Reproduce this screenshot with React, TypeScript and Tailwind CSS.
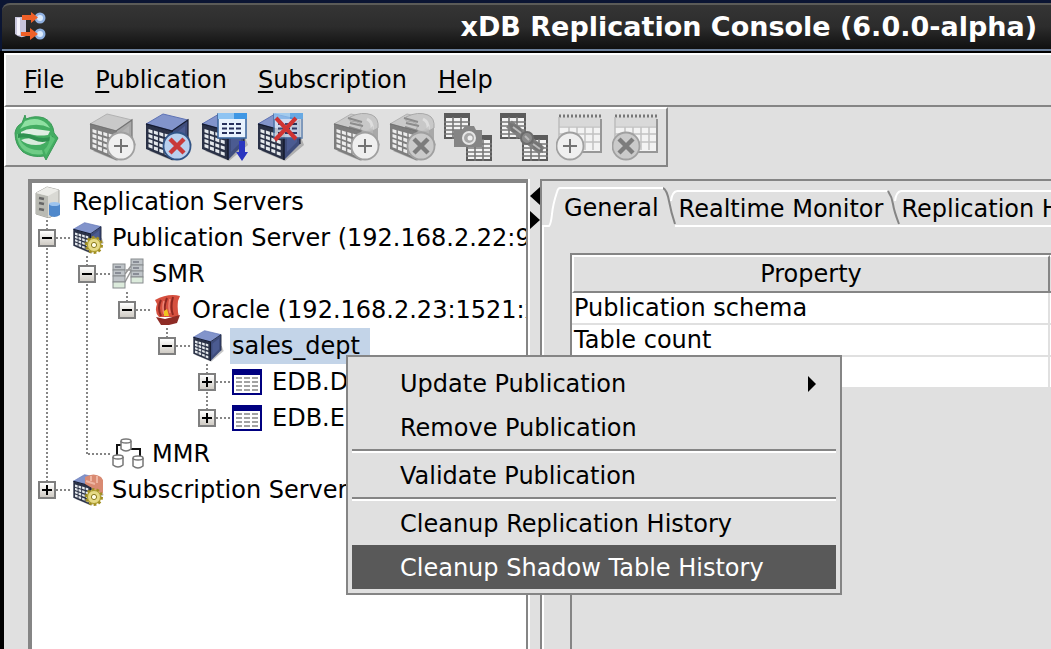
import type { ReactNode } from "react";

/* ---------- shared drawing parts ---------- */

type Tone = "blue" | "gray";

const tones = {
  blue: { top: "#8294cb", topLo: "#5f73b5", left: "#2a3146", right: "#3f4d7c", win: "#e4e8ec", edge: "#161c30" },
  gray: { top: "#c9c9c9", topLo: "#b2b2b2", left: "#7d7d7d", right: "#a9a9a9", win: "#ededed", edge: "#747474" },
};

function Cube({ tone = "blue", round = false }: { tone?: Tone; round?: boolean }) {
  const t = tones[tone];
  const windows = [];
  for (let r = 0; r < 4; r++) {
    for (let c = 0; c < 4; c++) {
      const x = 4.5 + c * 5.4;
      const y = 16 + c * 1.5 + r * (5 + c * 0.3);
      windows.push(
        <path key={`${r}-${c}`} d={`M${x} ${y}l4 1.2v3.6l-4 -1.500z`} fill={t.win} />,
      );
    }
  }
  return (
    <g>
      <path d="M5 38L29 48L48 32L45 24Z" fill="#000" opacity="0.22" />
      <path d="M2 11L28 18V47L2 36Z" fill={t.left} />
      {round ? (
        <path d="M28 18L34 6Q46 4 46 14V28Q44 38 28 47Z" fill={t.right} />
      ) : (
        <path d="M28 18L44 7V31L28 47Z" fill={t.right} />
      )}
      <path d="M2 11L19 1L44 7L28 18Z" fill={t.top} stroke={t.topLo} strokeWidth="1" />
      {round && (
        <>
          <path d="M18 4Q30 -2 40 2Q47 5 46 15Q38 21 28 17Q34 9 18 8Z" fill="#c8c8c8" stroke="#a8a8a8" />
          <path d="M16 5L30 9M18 10L31 13M17 14L30 18" stroke="#8c8c8c" strokeWidth="2" />
          <path d="M35 6Q41 9 40 16" fill="none" stroke="#dedede" strokeWidth="3" />
        </>
      )}
      <path d="M2 11L28 18V47" fill="none" stroke={t.edge} strokeWidth="1.6" />
      {!round && <path d="M28 18L44 7V31" fill="none" stroke={t.edge} strokeWidth="1.2" />}
      <path d="M31 21L41 13V29L31 39Z" fill={tone === "blue" ? "#5366a0" : "#bdbdbd"} opacity="0.6" />
      {windows}
    </g>
  );
}

function Badge({ cx, kind, active = false }: { cx: number; kind: "plus" | "cross"; active?: boolean }) {
  return (
    <g>
      <circle
        cx={cx}
        cy="33"
        r="13.5"
        fill={active ? "#b9d0ee" : kind === "plus" ? "#efefef" : "#cacaca"}
        stroke={active ? "#315487" : "#a0a0a0"}
        strokeWidth="1.8"
      />
      {kind === "plus" ? (
        <path d={`M${cx - 7} 33H${cx + 7}M${cx} 26V40`} stroke="#737373" strokeWidth="2" />
      ) : (
        <path
          d={`M${cx - 7} 26L${cx + 7} 40M${cx + 7} 26L${cx - 7} 40`}
          stroke={active ? "#c93a3a" : "#7c7c7c"}
          strokeWidth="4.4"
        />
      )}
    </g>
  );
}

function SheetWindow({ dim = false }: { dim?: boolean }) {
  return (
    <g opacity={dim ? 0.75 : 1}>
      <rect x="18" y="1" width="28" height="24" fill="#e8f2fd" stroke="#3f6aa0" strokeWidth="1.6" />
      <rect x="18" y="0" width="29" height="6" fill="#3f97e4" />
      <rect x="18" y="0" width="16" height="6" fill="#8fc4f2" />
      <path d="M22 11H42M22 15.500H42M22 20H42" stroke="#27305c" strokeWidth="2" strokeDasharray="5 2" />
    </g>
  );
}

function MiniGrid({ x, y }: { x: number; y: number }) {
  return (
    <g>
      <rect x={x + 1} y={y + 1} width="24" height="24" fill="#f4f4f4" stroke="#5c5c5c" strokeWidth="2" />
      <rect x={x} y={y} width="26" height="5" fill="#5c5c5c" />
      <path
        d={`M${x} ${y + 9}h26M${x} ${y + 13}h26M${x} ${y + 17}h26M${x} ${y + 21}h26M${x + 9} ${y + 4}v22M${x + 17} ${y + 4}v22`}
        stroke="#777"
        strokeWidth="1.6"
      />
    </g>
  );
}

function Calendar() {
  return (
    <g>
      <rect x="3" y="4" width="42" height="34" fill="#f3f3f3" />
      <rect x="3" y="4" width="42" height="9" fill="#d9d9d9" />
      <path d="M3 3H46" stroke="#777" strokeWidth="3" strokeDasharray="2 2" />
      <path d="M3 14H44M3 21H44M3 29H44M13 14V37M21 14V37M29 14V37M37 14V37" stroke="#c2c2c2" strokeWidth="1.5" />
      <path d="M3 4V30" stroke="#bdbdbd" strokeWidth="1.500" />
      <path d="M45 6V39H20" fill="none" stroke="#979797" strokeWidth="2" />
    </g>
  );
}

function Gear() {
  return (
    <g>
      <circle cx="22" cy="23" r="7.500" fill="#d8c75c" stroke="#a18e22" strokeWidth="3" strokeDasharray="2.6 2.1" />
      <circle cx="22" cy="23" r="6.500" fill="#e6da86" stroke="#a99a30" />
      <circle cx="22" cy="23" r="2.600" fill="#fffde8" stroke="#8a7a1c" />
    </g>
  );
}

/* ---------- toolbar ---------- */

function ToolButton({ label, children }: { label: string; children: ReactNode }) {
  return (
    <button type="button" aria-label={label} className="size-12 shrink-0">
      <svg viewBox="0 0 48 48" className="size-12" aria-hidden="true">
        {children}
      </svg>
    </button>
  );
}

function Toolbar() {
  return (
    <div className="flex">
      <div
        role="toolbar"
        aria-label="Actions"
        className="flex gap-7 border-2 border-t-white border-r-[#858585] border-b-[#858585] border-l-white px-1.5 py-1"
      >
        <ToolButton label="Refresh">
          <path
            d="M13 2L14 6Q23 2 32 5Q41 9 42 20L46 25L34 47L32 43Q20 45 11 39Q3 32 3 20Q4 13 10 10Z"
            fill="#43ad62"
            stroke="#3a9a57"
            strokeWidth="1"
          />
          <path d="M13 8Q26 3 35 11L38 15Q26 9 12 14L8 16Z" fill="#8fe0a2" />
          <path d="M5 21Q5 32 13 38Q22 43 31 41L30 37Q18 38 11 31Q7 27 8 22Z" fill="#6fcc86" />
          <path d="M9 19Q16 15 23 16L38 18L36 22Q28 23 22 22Q15 20 9 22Z" fill="#dfeee2" />
          <path d="M9 27Q15 24 24 26Q30 28 36 26Q33 32 24 32Q14 32 9 27Z" fill="#d7eadb" />
          <path d="M6 21Q14 19 22 23Q31 27 41 23L40 27Q30 31 22 27Q14 23 6 25Z" fill="#2f9150" />
          <path d="M38 22L43 26L34 42L32 37Q38 32 38 22Z" fill="#5cc377" />
        </ToolButton>
        <div className="flex gap-2">
          <ToolButton label="Create publication">
            <Cube tone="gray" />
            <Badge cx={33} kind="plus" />
          </ToolButton>
          <ToolButton label="Remove publication">
            <Cube />
            <Badge cx={33} kind="cross" active />
          </ToolButton>
          <ToolButton label="Update publication">
            <Cube />
            <SheetWindow />
            <path d="M39 28H45V39H48L42 48L36 39H39Z" fill="#2a36c0" />
          </ToolButton>
          <ToolButton label="Remove tables">
            <Cube />
            <SheetWindow dim />
            <path d="M20 5L40 26M40 5L19 27" stroke="#cf3333" strokeWidth="4" />
          </ToolButton>
        </div>
        <div className="flex gap-2">
          <ToolButton label="Create subscription">
            <Cube tone="gray" round />
            <Badge cx={33} kind="plus" />
          </ToolButton>
          <ToolButton label="Remove subscription">
            <Cube tone="gray" round />
            <Badge cx={33} kind="cross" />
          </ToolButton>
          <ToolButton label="Snapshot">
            <MiniGrid x={0} y={0} />
            <MiniGrid x={22} y={22} />
            <path d="M10 17H18L21 13H30L32 17H38V34H10Z" fill="#858585" />
            <circle cx="25" cy="25" r="6" fill="#a8a8a8" stroke="#e6e6e6" strokeWidth="2" />
            <circle cx="26" cy="25" r="2.500" fill="#efefef" />
          </ToolButton>
          <ToolButton label="Synchronize">
            <MiniGrid x={0} y={0} />
            <MiniGrid x={22} y={22} />
            <path d="M9 11L42 38" stroke="#808080" strokeWidth="9" />
            <path d="M8 9L20 14L23 20L12 19ZM30 27L42 31L43 40L34 36Z" fill="#757575" />
            <circle cx="27" cy="25" r="6" fill="#8a8a8a" stroke="#6c6c6c" strokeWidth="2" />
            <path d="M13 14L21 20M25 23L29 27M33 31L40 36" stroke="#bababa" strokeWidth="2" />
          </ToolButton>
          <ToolButton label="Add schedule">
            <Calendar />
            <Badge cx={14} kind="plus" />
          </ToolButton>
          <ToolButton label="Remove schedule">
            <Calendar />
            <Badge cx={14} kind="cross" />
          </ToolButton>
        </div>
      </div>
    </div>
  );
}

/* ---------- tree ---------- */

type Guide = "line" | "blank" | "corner" | "minus" | "minusLast" | "plus" | "plusLast";

function GuideCell({ kind }: { kind: Guide }) {
  const paths: Record<Guide, string> = {
    line: "M15 0V36",
    blank: "",
    corner: "M15 0V18M16 18H40",
    minus: "M15 0V36M24 18H38",
    minusLast: "M15 0V18M24 18H38",
    plus: "M15 0V36M24 18H38",
    plusLast: "M15 0V18M24 18H38",
  };
  const isToggle = kind.startsWith("minus") || kind.startsWith("plus");
  const open = kind.startsWith("minus");
  return (
    <span className="grid h-9 w-10 shrink-0 items-center">
      <svg viewBox="0 0 40 36" className="h-9 w-10 [grid-area:1/1]" aria-hidden="true">
        <path d={paths[kind]} stroke="#858585" strokeWidth="2" strokeDasharray="2 2" fill="none" />
      </svg>
      {isToggle && (
        <button
          type="button"
          aria-label={open ? "Collapse" : "Expand"}
          className="ml-1.5 flex size-[18px] items-center justify-center border-2 border-[#7f7f7f] bg-linear-to-b from-white to-[#cfcbc4] [grid-area:1/1]"
        >
          <svg viewBox="0 0 14 14" className="size-3.5" aria-hidden="true">
            <path d={open ? "M2 7H12" : "M2 7H12M7 2V12"} stroke="#000" strokeWidth="2" />
          </svg>
        </button>
      )}
    </span>
  );
}

function SmallCube() {
  return (
    <g transform="scale(0.66)">
      <Cube />
    </g>
  );
}

const treeIcons: Record<string, ReactNode> = {
  root: (
    <>
      <path d="M4 7L15 1L27 4V26L17 32L4 28Z" fill="#d9d9d4" stroke="#a5a5a0" />
      <path d="M4 7L16 10V31L4 28Z" fill="#b9bab3" />
      <path d="M4 7L15 1L27 4L16 10Z" fill="#ecece8" />
      <path d="M7 12L12 13M7 17L12 18M7 23L12 24" stroke="#666" strokeWidth="2.500" />
      <path d="M17 18V29Q22 33 28 29V18Z" fill="#4f88cb" />
      <ellipse cx="22.500" cy="18" rx="5.500" ry="2" fill="#9cc3ee" />
    </>
  ),
  pub: (
    <>
      <SmallCube />
      <Gear />
    </>
  ),
  smr: (
    <>
      <path d="M14 12H19M13 16L19 8M13 24L19 13" stroke="#999" strokeWidth="1.500" />
      {[6, 12, 18, 24].map((y) => (
        <rect key={y} x="1" y={y} width="12" height="6" fill={y === 24 ? "#dcebdc" : "#bfc4c8"} stroke="#878b8e" />
      ))}
      {[1, 7, 13, 19].map((y) => (
        <rect key={y} x="19" y={y} width="12" height="6" fill={y === 19 ? "#dcebdc" : "#bfc4c8"} stroke="#878b8e" />
      ))}
      <path d="M3 9H9M3 15H9M21 4H27M21 10H27M21 16H27" stroke="#898d96" strokeWidth="2" />
    </>
  ),
  oracle: (
    <>
      <path d="M3 6Q16 -1 28 2L26 7Q25 16 27 23H7Q2 18 5 10Z" fill="#d6503f" />
      <path d="M9 6Q5 14 9 22M15 4Q11 13 14 22M21 3Q18 13 21 21" fill="none" stroke="#8e2822" strokeWidth="2" />
      <path d="M12 7Q10 13 12 20M18 5Q16 12 18 19" fill="none" stroke="#ee8575" strokeWidth="1.500" />
      <path d="M4 23L13 25L28 21L25 29L17 31H9Z" fill="#8e2b25" />
      <path d="M12 17L15 15L17 22H12Z" fill="#f0c520" />
    </>
  ),
  sales: <SmallCube />,
  table: (
    <>
      <rect x="1" y="4" width="28" height="24" fill="#fff" stroke="#000080" strokeWidth="2" />
      <rect x="0" y="3" width="30" height="6" fill="#000080" />
      <path d="M4 12H26M4 16H26M4 20H26M4 24H26" stroke="#858585" strokeWidth="1.500" strokeDasharray="6 2" />
    </>
  ),
  mmr: (
    <>
      <path d="M9 7H5V17M19 11H28V18" fill="none" stroke="#111" strokeWidth="2" />
      {[
        [14, 3],
        [6, 19],
        [26, 20],
      ].map(([x, y]) => (
        <g key={x} stroke="#777" strokeWidth="1.500" fill="#fff">
          <path d={`M${x - 5} ${y}V${y + 8}Q${x} ${y + 12} ${x + 5} ${y + 8}V${y}`} />
          <ellipse cx={x} cy={y} rx="5" ry="2" />
        </g>
      ))}
    </>
  ),
  sub: (
    <>
      <SmallCube />
      <path d="M13 3Q22 -2 29 3L31 6V19L24 20L20 14L13 10Z" fill="#d98a72" />
      <path d="M14 7L23 10M19 2V7M25 2V9" stroke="#eeb5a2" strokeWidth="2" />
      <Gear />
    </>
  ),
};

const rows: { guides: Guide[]; icon: string; text: string; selected?: boolean }[] = [
  { guides: [], icon: "root", text: "Replication Servers" },
  { guides: ["minus"], icon: "pub", text: "Publication Server (192.168.2.22:9051)" },
  { guides: ["line", "minus"], icon: "smr", text: "SMR" },
  { guides: ["line", "line", "minusLast"], icon: "oracle", text: "Oracle (192.168.2.23:1521:xe)" },
  { guides: ["line", "line", "blank", "minusLast"], icon: "sales", text: "sales_dept", selected: true },
  { guides: ["line", "line", "blank", "blank", "plus"], icon: "table", text: "EDB.DEPT" },
  { guides: ["line", "line", "blank", "blank", "plusLast"], icon: "table", text: "EDB.EMP" },
  { guides: ["line", "corner"], icon: "mmr", text: "MMR" },
  { guides: ["plusLast"], icon: "sub", text: "Subscription Server" },
];

function Tree() {
  return (
    <ul role="tree" aria-label="Servers" className="pt-px">
      {rows.map((row) => (
        <li
          key={row.text}
          role="treeitem"
          aria-level={row.guides.length + 1}
          aria-selected={!!row.selected}
          className="flex h-9 items-center whitespace-nowrap"
        >
          {row.guides.map((g, i) => (
            <GuideCell key={i} kind={g} />
          ))}
          <span className="w-[38px] shrink-0">
            <svg viewBox="0 0 32 32" className="size-8" aria-hidden="true">
              {treeIcons[row.icon]}
            </svg>
          </span>
          <span className={row.selected ? "bg-[#c3d4e8] pr-2.5 pl-0.5 leading-9" : "px-0.5 leading-9"}>{row.text}</span>
        </li>
      ))}
    </ul>
  );
}

/* ---------- tabs and property table ---------- */

function Tabs() {
  return (
    <div role="tablist" className="flex h-10 items-end whitespace-nowrap leading-8">
      <span className="w-1.5 shrink-0 border-b-2 border-white" />
      <svg viewBox="0 0 12 40" className="h-10 w-3 shrink-0" aria-hidden="true">
        <path d="M0 39H1Q3 37 4 27T9 5Q10 1 12 1" fill="none" stroke="#fff" strokeWidth="2" />
      </svg>
      <button type="button" role="tab" aria-selected="true" className="h-10 shrink-0 border-t-2 border-white px-1">
        General
      </button>
      <svg viewBox="0 0 14 40" className="h-10 w-3.5 shrink-0" aria-hidden="true">
        <path d="M8 14Q9 5 14 4" fill="none" stroke="#fff" strokeWidth="2" />
        <path d="M0 1Q4 3 6 14T12 37" fill="none" stroke="#858585" strokeWidth="2" />
        <path d="M12 39H14" stroke="#fff" strokeWidth="2" />
      </svg>
      <button type="button" role="tab" aria-selected="false" className="h-[37px] shrink-0 border-y-2 border-white px-0.5">
        Realtime Monitor
      </button>
      <span className="h-[37px] w-0.5 shrink-0 border-y-2 border-white" />
      <svg viewBox="0 0 14 40" className="h-10 w-3.5 shrink-0" aria-hidden="true">
        <path d="M8 14Q9 5 14 4" fill="none" stroke="#fff" strokeWidth="2" />
        <path d="M1 4Q5 10 6 17T12 37" fill="none" stroke="#858585" strokeWidth="2" />
        <path d="M0 39H14" stroke="#fff" strokeWidth="2" />
      </svg>
      <button type="button" role="tab" aria-selected="false" className="h-[37px] shrink-0 border-y-2 border-white pr-2">
        Replication History
      </button>
      <span className="flex-1 border-b-2 border-white" />
    </div>
  );
}

function Properties() {
  return (
    <div className="flex-1 overflow-hidden border-t-2 border-l-2 border-[#858585]">
      <table className="w-full table-fixed border-separate border-spacing-0">
        <thead>
          <tr>
            <th className="h-[38px] w-[478px] border-2 border-t-white border-r-[#858585] border-b-[#858585] border-l-white p-0 text-center font-normal leading-8">
              Property
            </th>
            <th aria-label="Value" className="h-[38px] border-y-2 border-t-white border-b-[#858585] p-0" />
          </tr>
        </thead>
        <tbody className="bg-white">
          {["Publication schema", "Table count", ""].map((name) => (
            <tr key={name}>
              <td className="h-8 border-r-2 border-b-2 border-[#e0e0e0] p-0 pl-0.5 leading-[30px]">{name}</td>
              <td className="h-8 border-b-2 border-[#e0e0e0] p-0" />
            </tr>
          ))}
        </tbody>
      </table>
    </div>
  );
}

/* ---------- context menu ---------- */

function MenuItem({ children, active = false, submenu = false }: { children: string; active?: boolean; submenu?: boolean }) {
  return (
    <button
      type="button"
      role="menuitem"
      aria-haspopup={submenu ? "menu" : undefined}
      className={
        active
          ? "flex h-11 w-full items-center justify-between bg-[#595959] pt-0.5 pr-5 pl-12 text-white"
          : "flex h-11 w-full items-center justify-between pt-0.5 pr-5 pl-12"
      }
    >
      {children}
      {submenu && (
        <svg viewBox="0 0 8 16" className="h-4 w-2" aria-hidden="true">
          <path d="M0 0L8 8L0 16Z" />
        </svg>
      )}
    </button>
  );
}

function Separator() {
  return <div role="separator" className="h-1 border-t-2 border-b-2 border-t-[#858585] border-b-white" />;
}

function ContextMenu() {
  return (
    <div
      role="menu"
      className="absolute top-[355px] left-[346px] w-[496px] border-2 border-[#858585] bg-[#e0e0e0] p-1"
    >
      <MenuItem submenu>Update Publication</MenuItem>
      <MenuItem>Remove Publication</MenuItem>
      <Separator />
      <MenuItem>Validate Publication</MenuItem>
      <Separator />
      <MenuItem>Cleanup Replication History</MenuItem>
      <MenuItem active>Cleanup Shadow Table History</MenuItem>
    </div>
  );
}

/* ---------- window ---------- */

export default function App() {
  return (
    <div className="relative flex h-screen flex-col overflow-hidden bg-black font-['DejaVu_Sans',sans-serif] text-[24px] text-black">
      <header className="bg-[#0b1533] pt-[3px] pl-0.5">
        <div className="flex h-12 items-center justify-between rounded-tl-lg border-t-2 border-b-2 border-t-[#5b5b58] border-b-[#6d819c] bg-linear-to-b from-[#353535] via-[#2c2c2c] to-[#101010] pr-3.5 pl-3">
          <svg viewBox="0 0 32 32" className="size-8" aria-hidden="true">
            <path d="M1 6H12V25Q6 28 1 23Z" fill="#c8c6dd" />
            <path d="M3 7H6V24H3Z" fill="#f4f2fb" />
            <circle cx="26" cy="7" r="5.500" fill="#8fb0e0" />
            <circle cx="26" cy="23" r="5.500" fill="#8fb0e0" />
            <circle cx="26" cy="7" r="3" fill="#dbeafc" />
            <circle cx="26" cy="23" r="3" fill="#dbeafc" />
            <path d="M8 4H17V1L24 6.500L17 12V9H8Z" fill="#ef6028" />
            <path d="M7 21H16V17L24 23L16 29V25H7Z" fill="#ef6028" />
          </svg>
          <h1 className="text-[27px] leading-8 font-bold whitespace-nowrap text-white">
            xDB Replication Console (6.0.0-alpha)
          </h1>
        </div>
      </header>

      <div className="mt-0.5 ml-1 flex min-h-0 flex-1 flex-col bg-[#e0e0e0]">
        <nav
          role="menubar"
          className="flex h-[54px] shrink-0 items-center gap-[31px] border-t-2 border-b-2 border-l-2 border-t-white border-b-[#858585] border-l-white px-[18px]"
        >
          {["File", "Publication", "Subscription", "Help"].map((name) => (
            <button key={name} type="button" role="menuitem">
              <span className="underline decoration-2 underline-offset-3">{name[0]}</span>
              {name.slice(1)}
            </button>
          ))}
        </nav>
        <Toolbar />

        <main className="flex min-h-0 flex-1 pt-3 pl-6">
          <section className="w-[502px] shrink-0 border-r-2 border-white">
            <div className="h-full overflow-hidden border-t-4 border-r-2 border-l-4 border-[#858585] bg-white">
              <Tree />
            </div>
          </section>
          <div className="flex w-2.5 shrink-0 flex-col gap-1.5 pt-2">
            <button type="button" aria-label="Collapse left pane">
              <svg viewBox="0 0 10 18" className="h-[18px] w-2.5" aria-hidden="true">
                <path d="M10 0V18L0 9Z" />
              </svg>
            </button>
            <button type="button" aria-label="Collapse right pane">
              <svg viewBox="0 0 10 18" className="h-[18px] w-2.5" aria-hidden="true">
                <path d="M0 0V18L10 9Z" />
              </svg>
            </button>
          </div>
          <section className="flex min-w-0 flex-1 flex-col overflow-hidden border-t-2 border-l-2 border-[#858585] pt-1.5">
            <Tabs />
            <div className="flex min-h-0 flex-1 border-l-2 border-white pt-[26px] pl-[26px]">
              <Properties />
            </div>
          </section>
        </main>
      </div>

      <ContextMenu />
    </div>
  );
}
